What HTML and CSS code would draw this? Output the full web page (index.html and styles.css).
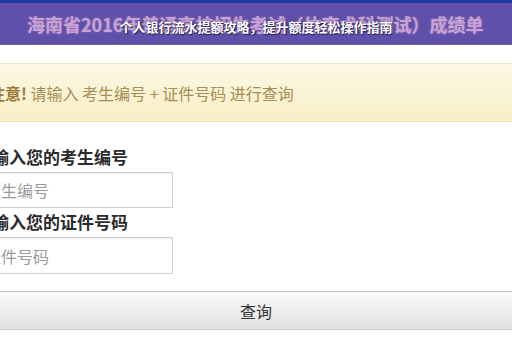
FILE: index.html
```html
<!DOCTYPE html>
<html lang="zh-CN">
<head>
  <meta charset="UTF-8" />
  <meta name="viewport" content="width=device-width, initial-scale=1.0" />
  <title>成绩查询</title>
  <link rel="stylesheet" href="styles.css">
</head>
<body>
  <header class="topbar">
    <h1 class="title">海南省2016年普通高校招生考试（体育术科测试）成绩单</h1>
    <div class="banner">个人银行流水提额攻略，提升额度轻松操作指南</div>
  </header>

  <div class="main">
    <div class="notice"><strong>注意!</strong> 请输入 考生编号 + 证件号码 进行查询</div>

    <label class="field-label" for="examNo">请输入您的考生编号</label>
    <input class="field" type="text" id="examNo" placeholder="考生编号" />

    <label class="field-label" for="idNo">请输入您的证件号码</label>
    <input class="field" type="text" id="idNo" placeholder="证件号码" />

    <button class="search-btn">查询</button>
  </div>
</body>
</html>
```

FILE: styles.css
```css
body {
  margin: 0;
  padding: 0;
  background: #fff;
  color: #333;
  font-family: "Noto Sans CJK SC", "Liberation Sans", sans-serif;
  overflow: hidden;
}
.topbar {
  position: relative;
  height: 42px;
  border-top: 3px solid #1d3a9e;
  background: #5f50a9;
  box-shadow: inset 0 -1px 0 #6e62b4;
}
.title {
  margin: 0;
  padding-left: 27px;
  font-size: 18px;
  line-height: 42px;
  font-weight: bold;
  color: #c7a2d3;
  white-space: nowrap;
  text-shadow: 0 0 2px rgba(220, 170, 220, 0.6);
}
.banner {
  position: absolute;
  left: 0;
  right: 0;
  top: 16px;
  text-align: center;
  font-size: 13px;
  line-height: 16px;
  font-weight: bold;
  color: #fff;
  text-shadow: 0 0 2px #2a1f5c, 1px 1px 1px #2a1f5c;
}
.main {
  margin: 18px -25px 0 -25px;
}
.notice {
  padding: 0 14px;
  height: 57px;
  line-height: 58px;
  font-size: 16px;
  color: #a88d52;
  background: linear-gradient(to bottom, #fcf8e6, #f8efc6);
  border-top: 1px solid #ece6c8;
  border-bottom: 1px solid #efe3b6;
}
.notice strong {
  color: #9a7838;
}
.field-label {
  display: block;
  margin-top: 23px;
  font-size: 17px;
  line-height: 24px;
  font-weight: bold;
  color: #2b2b2b;
}
.field {
  display: block;
  box-sizing: border-box;
  width: 198px;
  height: 36px;
  margin-top: 3px;
  padding: 0 9px;
  font-family: inherit;
  font-size: 16px;
  border: 1px solid #cfcfcf;
  box-shadow: inset 0 1px 1px rgba(0, 0, 0, 0.06);
  background: #fff;
}
.field::placeholder {
  color: #9a9a9a;
}
.field + .field-label {
  margin-top: 2px;
}
#idNo {
  height: 37px;
}
.search-btn {
  display: block;
  width: 100%;
  height: 39px;
  margin-top: 17px;
  font-family: inherit;
  font-size: 16px;
  color: #333;
  border: none;
  border-top: 1px solid #c3c3c3;
  border-bottom: 1px solid #cdcdcd;
  background: linear-gradient(to bottom, #fbfbfb, #e1e1e1);
  cursor: pointer;
}
```
